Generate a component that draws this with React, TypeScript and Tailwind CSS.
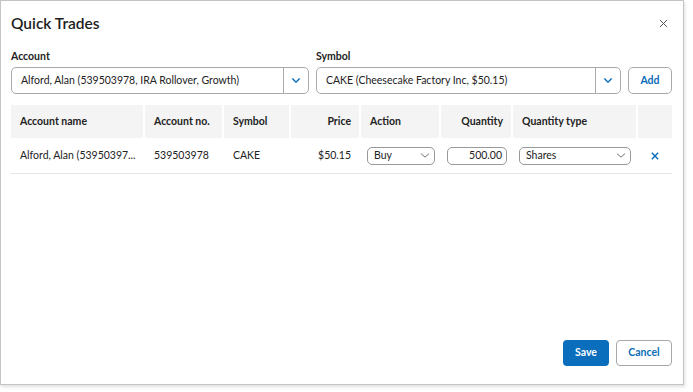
import React from 'react';

const Chevron = ({ className = '' }: { className?: string }) => (
  <svg viewBox="0 0 12 8" className={className} fill="none" stroke="currentColor" strokeWidth="1.6" strokeLinecap="round" strokeLinejoin="round">
    <path d="M2 2l4 4 4-4" />
  </svg>
);

const ThinChevron = () => (
  <svg viewBox="0 0 12 8" className="w-[10px] h-[7px] text-[#666]" fill="none" stroke="currentColor" strokeWidth="1.1" strokeLinecap="round">
    <path d="M1.5 2l4.5 4 4.5-4" />
  </svg>
);

const SplitSelect = ({ value, width }: { value: string; width: string }) => (
  <div className={`flex h-[27px] ${width} rounded-[5px] border border-[#a9a9a9] bg-white`}>
    <div className="flex-1 flex items-center pl-[9px] text-[10.5px] text-[#222] whitespace-nowrap overflow-hidden">{value}</div>
    <div className="w-[25px] border-l border-[#a9a9a9] flex items-center justify-center text-[#0b6cb8]">
      <Chevron className="w-[10px] h-[7px]" />
    </div>
  </div>
);

const cols = ['w-[132px]', 'w-[77px]', 'w-[65px]', 'w-[68px]', 'w-[78px]', 'w-[70px]', 'w-[123px]', 'w-[34px]'];

export default function App() {
  return (
    <div className="w-[693px] h-[392px] bg-white" style={{ fontFamily: 'Lato, "Open Sans", sans-serif' }}>
      <div className="w-[684px] h-[385px] border border-[#c4c4c4] shadow-[1px_2px_3px_rgba(0,0,0,0.12)] flex flex-col px-[10px] text-[#222]">
        <div className="flex items-center justify-between pt-[9px] h-[36px]">
          <h1 className="text-[15.5px] font-semibold text-[#1e1e1e]">Quick Trades</h1>
          <svg viewBox="0 0 10 10" className="w-[9px] h-[9px] mr-[5px] text-[#555]" stroke="currentColor" strokeWidth="1.1">
            <path d="M1 1l8 8M9 1l-8 8" />
          </svg>
        </div>

        <div className="flex items-end gap-[7px] mt-[11px]">
          <div className="flex flex-col">
            <label className="text-[10.5px] font-bold leading-[16px] mb-[3px]">Account</label>
            <SplitSelect value="Alford, Alan (539503978, IRA Rollover, Growth)" width="w-[298px]" />
          </div>
          <div className="flex flex-col">
            <label className="text-[10.5px] font-bold leading-[16px] mb-[3px]">Symbol</label>
            <SplitSelect value="CAKE (Cheesecake Factory Inc, $50.15)" width="w-[305px]" />
          </div>
          <button className="h-[27px] w-[44px] rounded-[5px] border border-[#a9a9a9] text-[10.5px] font-bold text-[#0b6cb8]">Add</button>
        </div>

        <div className="mt-[11px] w-[661px]">
          <div className="flex gap-[2px] h-[33px] text-[10.5px] font-bold whitespace-nowrap">
            {['Account name', 'Account no.', 'Symbol', 'Price', 'Action', 'Quantity', 'Quantity type', ''].map((h, i) => (
              <div
                key={i}
                className={`${cols[i]} bg-[#f4f4f4] flex items-center px-[9px] ${i === 3 || i === 5 ? 'justify-end pr-[8px]' : ''}`}
              >
                {h}
              </div>
            ))}
          </div>
          <div className="flex gap-[2px] h-[36px] items-center text-[10.5px] whitespace-nowrap border-b border-[#e4e4e4]">
            <div className={`${cols[0]} px-[9px]`}>Alford, Alan (53950397...</div>
            <div className={`${cols[1]} px-[9px]`}>539503978</div>
            <div className={`${cols[2]} px-[9px]`}>CAKE</div>
            <div className={`${cols[3]} px-[8px] text-right`}>$50.15</div>
            <div className={`${cols[4]} pl-[6px]`}>
              <div className="w-[68px] h-[18px] rounded-[5px] border border-[#999] flex items-center justify-between pl-[6px] pr-[4px]">
                <span>Buy</span>
                <ThinChevron />
              </div>
            </div>
            <div className={`${cols[5]} pl-[6px]`}>
              <div className="w-[60px] h-[18px] rounded-[5px] border border-[#999] flex items-center justify-end pr-[4px]">500.00</div>
            </div>
            <div className={`${cols[6]} pl-[6px]`}>
              <div className="w-[112px] h-[18px] rounded-[5px] border border-[#999] flex items-center justify-between pl-[6px] pr-[4px]">
                <span>Shares</span>
                <ThinChevron />
              </div>
            </div>
            <div className={`${cols[7]} flex justify-center`}>
              <svg viewBox="0 0 10 10" className="w-[8px] h-[8px] text-[#0b6cb8]" stroke="currentColor" strokeWidth="1.8">
                <path d="M1 1l8 8M9 1l-8 8" />
              </svg>
            </div>
          </div>
        </div>

        <div className="flex-1" />

        <div className="flex justify-end gap-[7px] pb-[18px] w-[661px]">
          <button className="h-[26px] w-[46px] rounded-[4px] bg-[#0a6ebd] text-white text-[10.5px] font-bold">Save</button>
          <button className="h-[26px] w-[56px] rounded-[4px] border border-[#a9a9a9] text-[#0b6cb8] text-[10.5px] font-bold">Cancel</button>
        </div>
      </div>
    </div>
  );
}
